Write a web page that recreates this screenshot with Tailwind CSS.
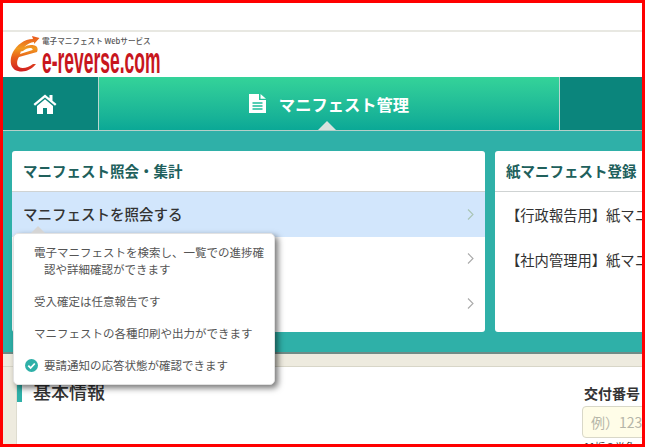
<!DOCTYPE html>
<html lang="ja">
<head>
<meta charset="utf-8">
<script src="https://cdn.jsdelivr.net/npm/@tailwindcss/browser@4"></script>
</head>
<body class="overflow-hidden bg-white">
<div class="relative w-[645px] h-[447px] overflow-hidden border-[3px] border-[#ff0000] bg-white font-['Noto_Sans_CJK_JP','Noto_Sans',sans-serif] text-[#333]">
  <div class="w-[800px]">
    <div class="h-[27px]"></div>
    <div class="h-[2px] bg-[#e8e8e2]"></div>
    <!-- logo -->
    <div class="h-[45px] pl-[7px] flex items-start">
      <svg class="w-[30px] h-[38px] mt-[4px] shrink-0" viewBox="0 0 30 38">
        <defs>
          <linearGradient id="lg" x1="0" y1="0" x2="0" y2="1">
            <stop offset="0" stop-color="#e8541c"/><stop offset="0.35" stop-color="#f09a20"/><stop offset="0.6" stop-color="#e8601a"/><stop offset="1" stop-color="#d01c20"/>
          </linearGradient>
        </defs>
        <path d="M29.500 2 L22 0 L23 3 C14 3 7 9 3 16 C-1 24 0 33 8 35 C15 37 22 33 26 28 L23 28 C18 32 12 33 9 31 C6 29 7 24 9 21 L27 16 C29 11 26 9 21 9 C16 9 12 12 9 16 L13 15 C15 13 18 12 20 12 C22 12 23 13 22.500 14 L10 18 C12 12 17 7 24 6 L24 8 Z" fill="url(#lg)"/>
      </svg>
      <div class="ml-[2px] flex flex-col">
        <div class="h-[12px] mt-[3px] text-[7.600px] leading-[12px] font-medium text-[#555] whitespace-nowrap">電子マニフェスト Webサービス</div>
        <div class="h-[29px] w-[118px] text-[36px] leading-[27px] font-bold font-['Liberation_Sans',sans-serif] text-[#c8161d] whitespace-nowrap origin-left scale-x-[0.485]">e-reverse.com</div>
      </div>
    </div>
    <!-- tabs -->
    <div class="flex h-[54px] border-b border-[#b5cfc9]">
      <div class="w-[96px] h-full bg-[#0b857c] flex items-center justify-center pr-[12px] border-r border-[#b9d6d0] shrink-0">
        <svg class="w-[24px] h-[20px]" viewBox="0 0 24 20" fill="#fff"><path d="M12 0.500 L0.500 10 L2 11.700 L12 3.500 L22 11.700 L23.500 10 L19.500 6.700 V1 H16.500 V4.200 Z M4 12 V20 H10 V14 H14 V20 H20 V12 L12 5.300 Z"/></svg>
      </div>
      <div class="relative w-[461px] h-full shrink-0 bg-gradient-to-b from-[#34d399] to-[#0aa896] flex items-center justify-center gap-[13px] border-r border-[#b9d6d0]">
        <svg class="w-[17px] h-[19px]" viewBox="0 0 17 19" fill="#fff"><path d="M0 0 H10 V6 H17 V19 H0 Z M11.500 0 L17 4.800 H11.500 Z"/><path d="M3.500 9 H13.500 M3.500 12 H13.500 M3.500 15 H13.500" stroke="#1cbd9b" stroke-width="1.300"/></svg>
        <span class="text-[16.300px] leading-[24px] font-bold text-white">マニフェスト管理</span>
        <div class="absolute left-[219px] bottom-0 w-0 h-0 border-x-[9px] border-x-transparent border-b-[9px] border-b-[#d8e3df]"></div>
      </div>
      <div class="flex-1 h-full bg-[#0b857c]"></div>
    </div>
    <!-- band -->
    <div class="h-[223px] bg-[#2fb0a8] pt-[20px] pl-[9px] flex gap-[10px] items-start border-b-2 border-[#6f8b86]">
      <div class="w-[473px] h-[181px] bg-white rounded-[3px] overflow-hidden shrink-0">
        <div class="h-[41px] border-b border-[#cfd3d3] pl-[11px] flex items-center text-[14.500px] font-bold text-[#20605c]">マニフェスト照会・集計</div>
        <div class="h-[45px] bg-[#d2e6fc] pl-[11px] pr-[11px] pb-[1px] flex items-center justify-between text-[14.500px] font-medium text-[#333]">
          <span>マニフェストを照会する</span>
          <svg class="w-[7px] h-[11px]" viewBox="0 0 7 11" fill="none" stroke="#a9c4b4" stroke-width="1.100"><path d="M1 0.500 L6 5.500 L1 10.500"/></svg>
        </div>
        <div class="h-[45px] pr-[11px] pb-[3px] flex items-center justify-end">
          <svg class="w-[7px] h-[11px]" viewBox="0 0 7 11" fill="none" stroke="#aaa" stroke-width="1.100"><path d="M1 0.500 L6 5.500 L1 10.500"/></svg>
        </div>
        <div class="h-[45px] pr-[11px] pb-[3px] flex items-center justify-end">
          <svg class="w-[7px] h-[11px]" viewBox="0 0 7 11" fill="none" stroke="#aaa" stroke-width="1.100"><path d="M1 0.500 L6 5.500 L1 10.500"/></svg>
        </div>
      </div>
      <div class="w-[300px] h-[181px] bg-white rounded-[3px] overflow-hidden shrink-0">
        <div class="h-[41px] border-b border-[#cfd3d3] pl-[11px] flex items-center text-[14.500px] font-bold text-[#20605c]">紙マニフェスト登録</div>
        <div class="h-[45px] pl-[11px] flex items-center text-[14.300px] text-[#333] whitespace-nowrap">【行政報告用】紙マニフェスト</div>
        <div class="h-[45px] pl-[11px] flex items-center text-[14.300px] text-[#333] whitespace-nowrap">【社内管理用】紙マニフェスト</div>
      </div>
    </div>
    <!-- content -->
    <div class="h-[13px] bg-[#eeebdf] border-b border-[#d8d6c8]"></div>
    <div class="flex h-[90px]">
      <div class="w-[14px] bg-[#eeebdf] border-r border-[#dedccf] shrink-0"></div>
      <div class="flex-1 bg-white flex">
        <div class="w-[565px] pt-[18px] shrink-0">
          <div class="border-l-[5px] border-[#2fb0a8] pl-[11px] h-[17px] text-[18px] leading-[12px] font-medium text-[#333]">基本情報</div>
        </div>
        <div class="pt-[16px] w-[200px]">
          <div class="pl-[2px] text-[14px] leading-[20px] font-bold text-[#333]">交付番号</div>
          <div class="mt-[3px] w-[150px] h-[32px] bg-[#fffde8] border border-[#d9d8c8] rounded-[4px] pl-[8px] flex items-center text-[14px] text-[#b5b5a8]">例）1234567</div>
          <div class="mt-[2px] pl-[2px] text-[10px] leading-[14px] text-[#333]">11桁の半角</div>
        </div>
      </div>
    </div>
  </div>
  <!-- tooltip -->
  <div class="absolute left-[10px] top-[230px] w-[262px] h-[152px] bg-white rounded-[5px] border border-[#e2e2e2] shadow-[3px_3px_6px_rgba(0,0,0,0.55)] text-[11.500px] text-[#555]">
    <div class="absolute left-[17px] -top-[8px] w-0 h-0 border-x-[7px] border-x-transparent border-b-[7px] border-b-[#d5d5d5]"></div>
    <div class="pl-[20px] pt-[10px] pr-[8px]">
      <div class="leading-[17px] pb-[10px]">電子マニフェストを検索し、一覧での進捗確<br><span class="pl-[10px]">認や詳細確認ができます</span></div>
      <div class="leading-[17px] mt-[5px]">受入確定は任意報告です</div>
      <div class="leading-[17px] mt-[15px]">マニフェストの各種印刷や出力ができます</div>
    </div>
    <div class="flex items-center gap-[6px] pl-[11px] mt-[15px] leading-[17px]">
      <svg class="w-[13px] h-[13px] shrink-0" viewBox="0 0 13 13"><circle cx="6.500" cy="6.500" r="6.500" fill="#2fb0a8"/><path d="M3.300 6.700 L5.600 9 L9.800 4.500" fill="none" stroke="#fff" stroke-width="1.800"/></svg>
      <span>要請通知の応答状態が確認できます</span>
    </div>
  </div>
</div>
</body>
</html>
